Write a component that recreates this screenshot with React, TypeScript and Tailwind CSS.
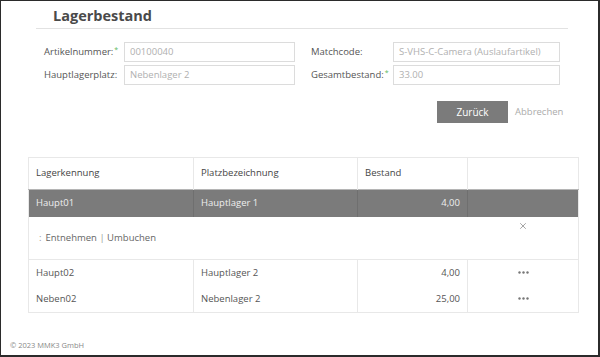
import { X } from "lucide-react";

// ── Data ─────────────────────────────────────────────────────────────────────
interface StockRow {
  id: string;
  place: string;
  amount: string;
}

const rows: StockRow[] = [
  { id: "Haupt01", place: "Hauptlager 1", amount: "4,00" },
  { id: "Haupt02", place: "Hauptlager 2", amount: "4,00" },
  { id: "Neben02", place: "Nebenlager 2", amount: "25,00" },
];

const font = { fontFamily: '"Open Sans", "Noto Sans", Arial, sans-serif' };

function Req() {
  return <span className="relative -top-[3px] ml-px text-[7px] text-[#5cb85c]">*</span>;
}

function Field({ label, value, req, labelW, inputW }: { label: string; value: string; req?: boolean; labelW: string; inputW: string }) {
  return (
    <div className="flex items-center">
      <div className={`${labelW} text-[9.5px] text-[#555]`}>
        {label}
        {req && <Req />}
      </div>
      <div className={`${inputW} h-[20px] border border-[#dcdcdc] px-[5px] flex items-center text-[9.5px] text-[#b0b0b0]`}>
        {value}
      </div>
    </div>
  );
}

function Dots() {
  return (
    <svg width="11" height="3" viewBox="0 0 11 3" className="mx-auto">
      <circle cx="1.5" cy="1.5" r="1.2" fill="#777" />
      <circle cx="5.5" cy="1.5" r="1.2" fill="#777" />
      <circle cx="9.5" cy="1.5" r="1.2" fill="#777" />
    </svg>
  );
}

// ── App ──────────────────────────────────────────────────────────────────────
export default function App() {
  const [selected, ...rest] = rows;
  return (
    <div
      className="w-[600px] h-[357px] bg-white border-[#2b2b2b] border-t border-l border-r-2 border-b-2 flex flex-col overflow-hidden"
      style={font}
    >
      {/* Title */}
      <div className="ml-[35px] mr-[30px] mt-[6px] border-b border-[#e2e2e2] pb-[3px] pl-[17px]">
        <h1 className="text-[14.5px] font-bold text-[#4a4a4a] leading-[18px]">Lagerbestand</h1>
      </div>

      {/* Form */}
      <div className="ml-[43px] mt-[13px] flex gap-[16px]">
        <div className="flex flex-col gap-[3px]">
          <Field label="Artikelnummer:" value="00100040" req labelW="w-[80px]" inputW="w-[171px]" />
          <Field label="Hauptlagerplatz:" value="Nebenlager 2" labelW="w-[80px]" inputW="w-[171px]" />
        </div>
        <div className="flex flex-col gap-[3px]">
          <Field label="Matchcode:" value="S-VHS-C-Camera (Auslaufartikel)" labelW="w-[82px]" inputW="w-[167px]" />
          <Field label="Gesamtbestand:" value="33.00" req labelW="w-[82px]" inputW="w-[167px]" />
        </div>
      </div>

      {/* Actions */}
      <div className="mt-[16px] ml-[436px] flex items-center gap-[7px]">
        <button className="w-[71px] h-[22px] bg-[#7b7b7b] text-[10px] text-white">Zurück</button>
        <span className="text-[9.5px] text-[#ababab]">Abbrechen</span>
      </div>

      {/* Table */}
      <table className="mt-[34px] ml-[27px] w-[550px] table-fixed border-collapse border border-[#e8e8e8] text-[9.5px] text-[#555]">
        <colgroup>
          <col className="w-[165px]" />
          <col className="w-[164px]" />
          <col className="w-[110px]" />
          <col className="w-[111px]" />
        </colgroup>
        <thead>
          <tr className="h-[32px]">
            <th className="border-r border-[#e8e8e8] px-[7px] text-left font-normal text-[#444]">Lagerkennung</th>
            <th className="border-r border-[#e8e8e8] px-[7px] text-left font-normal text-[#444]">Platzbezeichnung</th>
            <th className="border-r border-[#e8e8e8] px-[7px] text-left font-normal text-[#444]">Bestand</th>
            <th />
          </tr>
        </thead>
        <tbody>
          <tr className="h-[27px] bg-[#7b7b7b] text-[#eeeeee] border-t border-[#b5b5b5]">
            <td className="border-r border-[#6f6f6f] px-[7px]">{selected.id}</td>
            <td className="border-r border-[#6f6f6f] px-[7px]">{selected.place}</td>
            <td className="border-r border-[#6f6f6f] px-[7px] text-right">{selected.amount}</td>
            <td />
          </tr>
          <tr className="h-[43px] border-b border-[#e8e8e8]">
            <td colSpan={3} className="px-[7px] pt-[14px] align-top text-[#666]">
              <span className="ml-[3px] mr-[4px] text-[#999]">:</span>
              Entnehmen <span className="text-[#999]">|</span> Umbuchen
            </td>
            <td className="align-top pt-[4px]">
              <X className="mx-auto text-[#777]" size={10} strokeWidth={1.6} />
            </td>
          </tr>
          {rest.map((r, i) => (
            <tr key={r.id} className={i === 0 ? "h-[26px]" : "h-[27px]"}>
              <td className="border-r border-[#e8e8e8] px-[7px]">{r.id}</td>
              <td className="border-r border-[#e8e8e8] px-[7px]">{r.place}</td>
              <td className="border-r border-[#e8e8e8] px-[7px] text-right">{r.amount}</td>
              <td>
                <Dots />
              </td>
            </tr>
          ))}
        </tbody>
      </table>

      {/* Footer */}
      <div className="mt-auto mb-[4px] ml-[9px] text-[7.5px] text-[#888]">© 2023 MMK3 GmbH</div>
    </div>
  );
}
